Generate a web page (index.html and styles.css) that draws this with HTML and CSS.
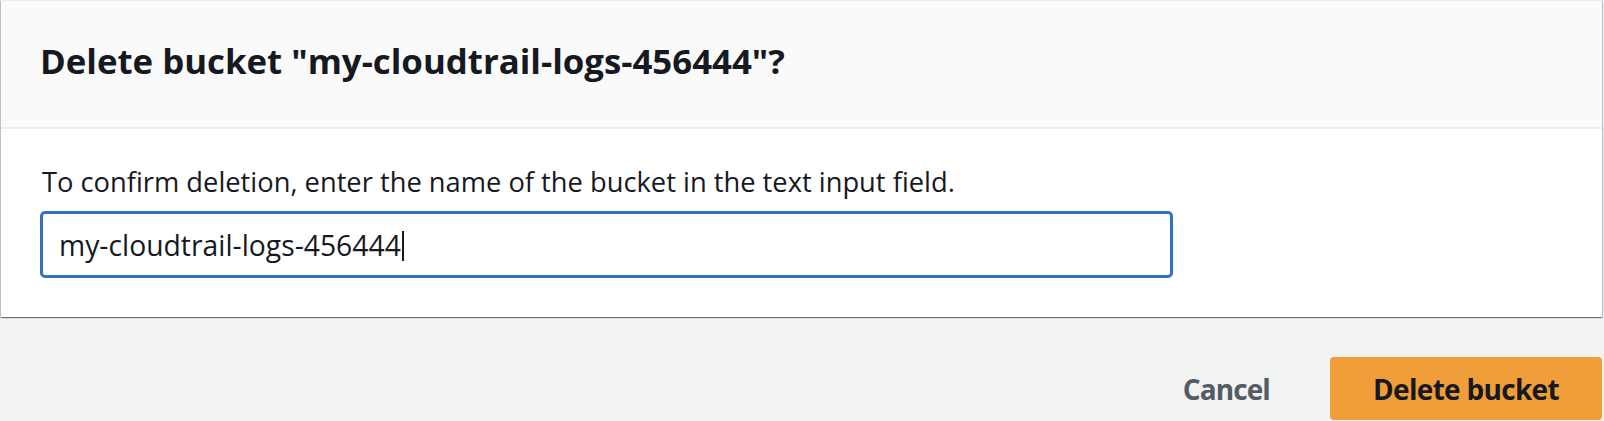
FILE: index.html
```html
<!DOCTYPE html>
<html lang="en">
<head>
<meta charset="utf-8">
<title>Delete bucket</title>
<link rel="stylesheet" href="styles.css">
</head>
<body>
<div class="page">
  <section class="card">
    <header class="card-header">
      <h2 class="card-title">Delete bucket "my-cloudtrail-logs-456444"?</h2>
    </header>
    <div class="card-body">
      <p class="hint">To confirm deletion, enter the name of the bucket in the text input field.</p>
      <div class="field" role="textbox"><span class="field-value">my-cloudtrail-logs-456444</span><span class="caret"></span></div>
    </div>
  </section>
  <footer class="actions">
    <button class="btn btn-link" type="button">Cancel</button>
    <button class="btn btn-primary" type="button">Delete bucket</button>
  </footer>
</div>
</body>
</html>
```
FILE: styles.css
```css
html, body {
  margin: 0;
  padding: 0;
  background: #f2f3f3;
  height: 100%;
  overflow: hidden;
}
body {
  font-family: "Open Sans", "Noto Sans", sans-serif;
  color: #16191f;
}
.page {
  padding: 0 2px 0 1px;
}
.card {
  background: #ffffff;
  border-top: 1px solid #eaeded;
  box-shadow: 0 1px 1px 0 rgba(0, 28, 36, 0.35), 1px 1px 1px 0 rgba(0, 28, 36, 0.18), -1px 1px 1px 0 rgba(0, 28, 36, 0.18);
}
.card-header {
  background: #fafafa;
  border-bottom: 2px solid #eaeded;
  padding: 40px 39px 46px;
}
.card-title {
  margin: 0;
  font-size: 34.8px;
  line-height: 40px;
  font-weight: 700;
  color: #16191f;
}
.card-body {
  padding: 35px 39px 39px;
}
.hint {
  margin: 0;
  padding-left: 2px;
  font-size: 27.3px;
  line-height: 36px;
  color: #16191f;
}
.field {
  margin-top: 11px;
  width: 1133px;
  height: 67px;
  box-sizing: border-box;
  border: 3px solid #3273bd;
  border-radius: 5px;
  padding: 0 16px;
  display: flex;
  align-items: center;
  font-size: 28.3px;
  color: #16191f;
  background: #fff;
}
.caret {
  display: inline-block;
  width: 2px;
  height: 30px;
  margin-left: 1px;
  margin-top: 2px;
  background: #16191f;
}
.actions {
  display: flex;
  justify-content: flex-end;
  align-items: center;
  padding: 40px 0 0;
}
.btn {
  height: 63px;
  border: none;
  font-family: "Open Sans", "Noto Sans", sans-serif;
  font-weight: 700;
  cursor: pointer;
  padding: 0;
}
.btn-link {
  background: transparent;
  color: #545b64;
  font-size: 28px;
  letter-spacing: -0.9px;
  padding: 0 60px 0 0;
}
.btn-primary {
  width: 272px;
  background: #f09e39;
  color: #16191f;
  border-radius: 4px;
  font-size: 28px;
  letter-spacing: -0.7px;
}
```
